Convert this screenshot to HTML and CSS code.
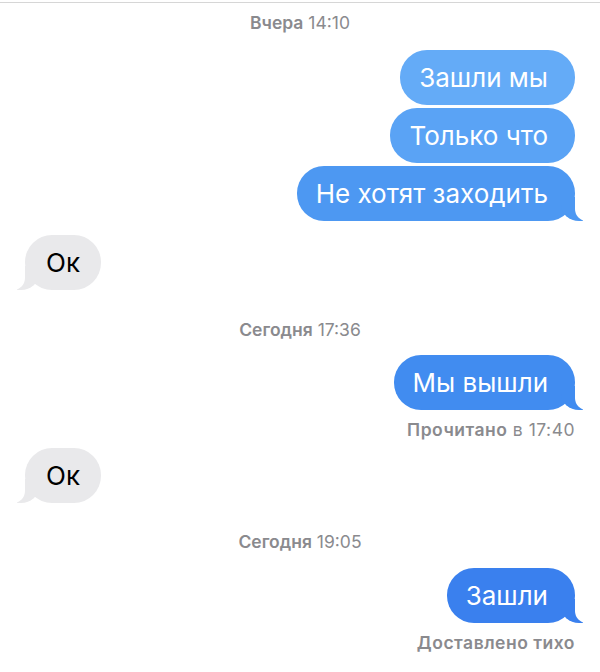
FILE: index.html
```html
<!DOCTYPE html>
<html lang="ru">

<head>
  <meta charset="UTF-8">
  <title>Сообщения</title>
  <link rel="stylesheet" href="styles.css">
</head>

<body>
  <div class="chat">
    <div class="stamp"><b>Вчера</b> 14:10</div>

    <div class="msg out c1 first">Зашли мы</div>
    <div class="msg out c2">Только что</div>
    <div class="msg out c3 tail">Не хотят заходить</div>

    <div class="msg in tail ok1">Ок</div>

    <div class="stamp s2"><b>Сегодня</b> 17:36</div>

    <div class="msg out c4 tail">Мы вышли</div>
    <div class="note"><b>Прочитано</b> в 17:40</div>

    <div class="msg in tail ok2">Ок</div>

    <div class="stamp s3"><b>Сегодня</b> 19:05</div>

    <div class="msg out c5 tail">Зашли</div>
    <div class="note"><b>Доставлено тихо</b></div>
  </div>
</body>

</html>
```

FILE: styles.css
```css
body {
  margin: 0;
  background: #fff;
  font-family: Inter, "Noto Sans", sans-serif;
}

.chat {
  border-top: 1px solid #d6d6d6;
  margin-top: 2px;
  display: flex;
  flex-direction: column;
  padding: 0 25px;
}

.stamp {
  text-align: center;
  color: #8a8a8e;
  font-size: 17.5px;
  line-height: 20px;
  margin-top: 10px;
}

.stamp b,
.note b {
  font-weight: 600;
}

.s2 {
  margin-top: 30px;
}

.s3 {
  margin-top: 29px;
}

.msg {
  position: relative;
  font-size: 26px;
  line-height: 31px;
  padding: 12px 27px 12px 19px;
  border-radius: 27px;
  max-width: 70%;
  margin-top: 3px;
}

.out {
  align-self: flex-end;
  color: #fff;
  background: #4f9af3;
}

.in {
  align-self: flex-start;
  color: #000;
  background: #e9e9eb;
  padding: 12px 21px 12px 21px;
}

.first {
  margin-top: 17px;
}

.c1 { background: #64abf7; }
.c2 { background: #5aa3f5; }
.c3 { background: #4d98f2; }
.c4 { background: #418cf0; }
.c5 { background: #3a80ee; }

.ok1 {
  margin-top: 14px;
}

.ok2 {
  margin-top: 8px;
}

.c4 {
  margin-top: 15px;
}

.c5 {
  margin-top: 16px;
}

.tail::before,
.tail::after {
  content: "";
  position: absolute;
  bottom: 0;
  height: 24px;
}

.out.tail::before {
  right: -8px;
  width: 22px;
  background: inherit;
  border-bottom-left-radius: 18px 16px;
}

.out.tail::after {
  right: -14px;
  width: 14px;
  background: #fff;
  border-bottom-left-radius: 12px;
}

.in.tail::before {
  left: -8px;
  width: 22px;
  background: inherit;
  border-bottom-right-radius: 18px 16px;
}

.in.tail::after {
  left: -14px;
  width: 14px;
  background: #fff;
  border-bottom-right-radius: 12px;
}

.note {
  align-self: flex-end;
  color: #8a8a8e;
  font-size: 17.5px;
  line-height: 20px;
  letter-spacing: 0.5px;
  margin-top: 10px;
}
```
